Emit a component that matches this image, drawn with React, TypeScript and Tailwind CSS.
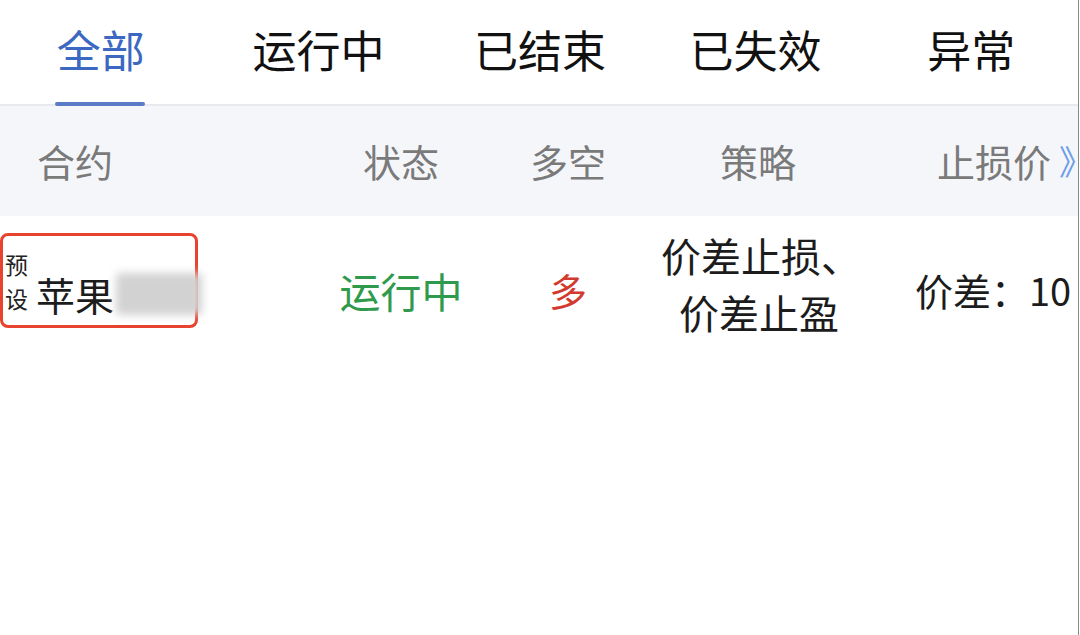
const tabs = ['全部', '运行中', '已结束', '已失效', '异常']

const font = { fontFamily: '"Noto Sans CJK SC", "Noto Sans", sans-serif' }

export default function App() {
  return (
    <div className="h-[635px] w-[1080px] overflow-hidden bg-white whitespace-nowrap" style={font}>
      <div className="h-full w-[1079px] overflow-hidden border-r border-[#8a8a8a]">
        {/* tabs */}
        <div className="flex h-[106px] border-b-2 border-[#e9eaee]">
          {tabs.map((t, i) => (
            <div key={t} className="relative flex flex-1 items-center justify-center">
              <span
                className={
                  i === 0
                    ? 'mr-[14px] -mt-[6px] text-[44px] leading-none text-[#3c68c2]'
                    : i === 1
                      ? 'mr-[10px] -mt-[6px] text-[44px] leading-none text-[#111]'
                      : 'ml-[2px] -mt-[6px] text-[44px] leading-none text-[#111]'
                }
              >
                {t}
              </span>
              {i === 0 && (
                <div className="absolute bottom-[-2px] left-[55px] h-[4px] w-[90px] rounded-full bg-[#5a7cc6]" />
              )}
            </div>
          ))}
        </div>

        {/* header */}
        <div className="flex h-[110px] items-center bg-[#f5f6fa] text-[38px] leading-none text-[#7a7a7a]">
          <div className="w-[320px] shrink-0 pl-[37px]">合约</div>
          <div className="w-[162px] shrink-0 text-center">状态</div>
          <div className="w-[172px] shrink-0 text-center">多空</div>
          <div className="w-[208px] shrink-0 text-center">策略</div>
          <div className="flex shrink-0 items-center pl-[75px]">
            <span>止损价</span>
            <span className="ml-[8px] text-[34px] text-[#6f9ee6]">》</span>
          </div>
        </div>

        {/* row */}
        <div className="flex h-[148px] items-center text-[38px] leading-none text-[#1c1c1c]">
          <div className="flex w-[320px] shrink-0 items-center">
            <div className="-mt-[20px] flex h-[95px] w-[198px] shrink-0 items-center rounded-lg border-[3px] border-[#e8432e] pl-[2px]">
              <div className="mt-[2px] flex shrink-0 flex-col text-[23px] leading-[34px] text-[#222]">
                <span>预</span>
                <span>设</span>
              </div>
              <span className="ml-[8px] mt-[28px] shrink-0 text-[39px]">苹果</span>
              <div className="ml-[2px] mt-[28px] h-[42px] w-[86px] shrink-0 rounded bg-[#d2d2d2] blur-[4px]" />
            </div>
          </div>
          <div className="w-[162px] shrink-0 text-center text-[41px] text-[#2f9a4c]">运行中</div>
          <div className="w-[172px] shrink-0 text-center text-[38px] text-[#d23a2f]">多</div>
          <div className="-mt-[12px] flex w-[208px] shrink-0 flex-col items-center text-[40px] leading-[57px]">
            <span className="pl-[6px]">价差止损、</span>
            <span className="pl-[2px]">价差止盈</span>
          </div>
          <div className="shrink-0 pl-[53px] text-[38px]">价差：10</div>
        </div>
      </div>
    </div>
  )
}
